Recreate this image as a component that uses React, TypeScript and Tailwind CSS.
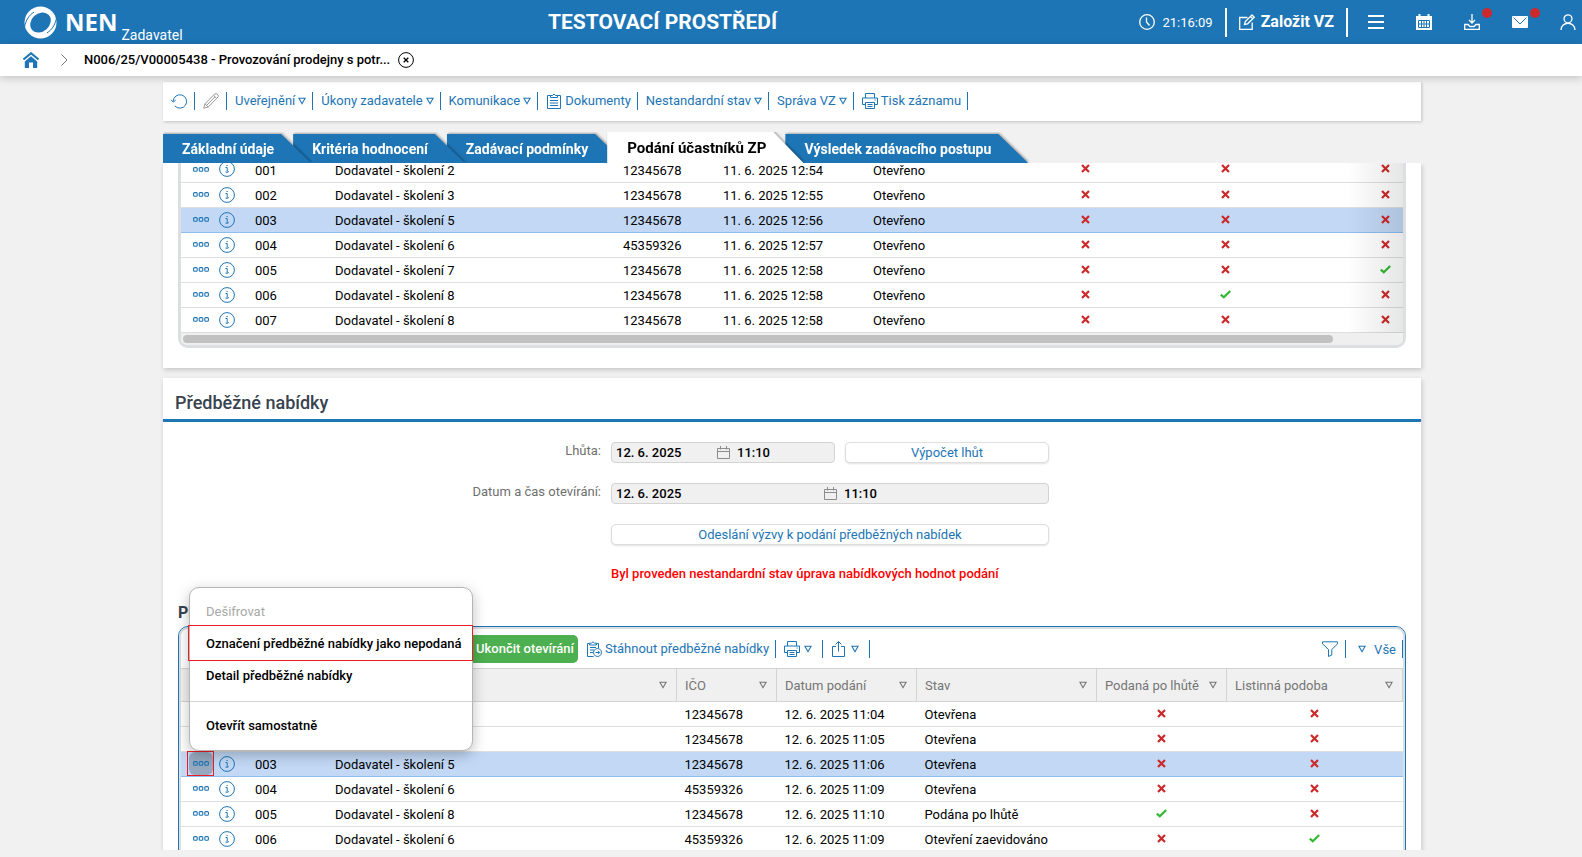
import { ReactNode, useState } from "react";

type Row = { no: string; name: string; ico: string; date: string; state: string; flags: boolean[] };

const BIDS: Row[] = [
  { no: "001", name: "Dodavatel - školení 2", ico: "12345678", date: "11. 6. 2025 12:54", state: "Otevřeno", flags: [false, false, false] },
  { no: "002", name: "Dodavatel - školení 3", ico: "12345678", date: "11. 6. 2025 12:55", state: "Otevřeno", flags: [false, false, false] },
  { no: "003", name: "Dodavatel - školení 5", ico: "12345678", date: "11. 6. 2025 12:56", state: "Otevřeno", flags: [false, false, false] },
  { no: "004", name: "Dodavatel - školení 6", ico: "45359326", date: "11. 6. 2025 12:57", state: "Otevřeno", flags: [false, false, false] },
  { no: "005", name: "Dodavatel - školení 7", ico: "12345678", date: "11. 6. 2025 12:58", state: "Otevřeno", flags: [false, false, true] },
  { no: "006", name: "Dodavatel - školení 8", ico: "12345678", date: "11. 6. 2025 12:58", state: "Otevřeno", flags: [false, true, false] },
  { no: "007", name: "Dodavatel - školení 8", ico: "12345678", date: "11. 6. 2025 12:58", state: "Otevřeno", flags: [false, false, false] },
];

const PRELIMINARY: Row[] = [
  { no: "001", name: "Dodavatel - školení 2", ico: "12345678", date: "12. 6. 2025 11:04", state: "Otevřena", flags: [false, false] },
  { no: "002", name: "Dodavatel - školení 3", ico: "12345678", date: "12. 6. 2025 11:05", state: "Otevřena", flags: [false, false] },
  { no: "003", name: "Dodavatel - školení 5", ico: "12345678", date: "12. 6. 2025 11:06", state: "Otevřena", flags: [false, false] },
  { no: "004", name: "Dodavatel - školení 6", ico: "45359326", date: "12. 6. 2025 11:09", state: "Otevřena", flags: [false, false] },
  { no: "005", name: "Dodavatel - školení 8", ico: "12345678", date: "12. 6. 2025 11:10", state: "Podána po lhůtě", flags: [true, false] },
  { no: "006", name: "Dodavatel - školení 6", ico: "45359326", date: "12. 6. 2025 11:09", state: "Otevření zaevidováno", flags: [false, true] },
];

const TABS = [
  { label: "Základní údaje", z: "z-[4]" },
  { label: "Kritéria hodnocení", z: "z-[3]" },
  { label: "Zadávací podmínky", z: "z-[2]" },
  { label: "Podání účastníků ZP", z: "z-[5]" },
  { label: "Výsledek zadávacího postupu", z: "z-[1]" },
];

/* ---------- icons ---------- */

function Icon({ size = 16, children, className = "" }: { size?: number; children: ReactNode; className?: string }) {
  return (
    <svg width={size} height={size} viewBox={`0 0 ${size} ${size}`} fill="none" stroke="currentColor"
      strokeWidth="1" aria-hidden="true" className={`shrink-0 ${className}`}>
      {children}
    </svg>
  );
}

const Caret = ({ className = "" }: { className?: string }) => (
  <svg width="8" height="8" viewBox="0 0 8 8" fill="none" stroke="currentColor" strokeWidth="1.1" aria-hidden="true"
    className={`shrink-0 ${className}`}>
    <path d="M0.9 1.2h6.2L4 6.7z" />
  </svg>
);

const Printer = () => (
  <Icon>
    <path d="M3.5 5V.5h9V5M3.5 11.5h-3v-6.500h15v6.500h-3M3.500 9.500h9v6h-9zM5.500 11.500h5M5.500 13.500h5M12.500 7h1.200" />
  </Icon>
);

const Clipboard = ({ arrow = false }: { arrow?: boolean }) => (
  <Icon>
    <path d={arrow ? "M3.500 2.500h-2v13h6M10.500 2.500h2v4.500" : "M4.500 2.500h-3v13h13v-13h-3"} />
    <path d={arrow ? "M3.500 4V2.200h2Q7 -.8 8.500 2.200h2V4zM4 6.500h6M4 9h4M4 11.500h3" : "M4.500 4.500v-2h2q1.500-3 3 0h2v2zM4 7.500h8M4 10h8M4 12.500h8"} />
    {arrow && <path d="M11.500 7.500a4 4 0 1 0 .01 0zM9.500 11.500h4M12 9.800l1.700 1.700-1.700 1.700" />}
  </Icon>
);

const SmallCalendar = () => (
  <svg width="13" height="13" viewBox="0 0 13 13" fill="none" stroke="#8c8c8c" aria-hidden="true" className="shrink-0">
    <path d="M.5 2.500h12v10H.5zM.5 5.500h12M3.500 0v3.500M9.500 0v3.500" />
  </svg>
);

const Flag = ({ on }: { on: boolean }) =>
  on ? (
    <svg width="11" height="9" viewBox="0 0 11 9" fill="none" stroke="#33b833" strokeWidth="2.2" role="img" aria-label="Ano" className="mx-auto block mb-px">
      <path d="M.8 4.600l3 2.700L10.200 1" />
    </svg>
  ) : (
    <svg width="9" height="9" viewBox="0 0 9 9" fill="none" stroke="#cc2a2a" strokeWidth="2.2" role="img" aria-label="Ne" className="mx-auto block mb-px">
      <path d="M1 1l7 7M8 1L1 8" />
    </svg>
  );

function Logo() {
  return (
    <svg width="33" height="33" viewBox="0 0 33 33" aria-hidden="true" className="shrink-0">
      <circle cx="16.500" cy="16.500" r="16" fill="#fff" />
      <ellipse cx="16.500" cy="16.500" rx="11.200" ry="9" transform="rotate(-42 16.500 16.500)" fill="#1d75b5" />
      <path d="M.5 21C2 14 5 9 10 6.200" fill="none" stroke="#1d75b5" strokeWidth="1" />
      <path d="M32.500 12C31 19 28 24 23 26.800" fill="none" stroke="#1d75b5" strokeWidth="1" />
    </svg>
  );
}

/* ---------- page chrome ---------- */

function TopBar() {
  return (
    <header className="h-11 shrink-0 bg-[#1d75b5] text-white flex items-center pl-6 pr-1.5">
      <a href="#" className="flex items-center h-full">
        <Logo />
        <span className="font-['Open_Sans',sans-serif] font-bold text-[24px] leading-none ml-2">NEN</span>
        <span className="text-sm leading-none self-end mb-[2px] ml-1">Zadavatel</span>
      </a>
      <p className="mx-auto pl-1 pt-0.5 text-[21px] font-bold">TESTOVACÍ PROSTŘEDÍ</p>
      <div className="flex items-center">
        <Icon className="mr-2"><circle cx="8" cy="8" r="7.300" strokeWidth="1.300" /><path d="M7.500 3.500V8l3 3.500" strokeWidth="1.300" /></Icon>
        <span className="text-[13px] pt-px">21:16:09</span>
        <span className="w-0.5 h-[29px] bg-white mx-3" />
        <button className="flex items-center gap-1.5 font-bold text-[16px]">
          <Icon>
            <path d="M8.500 3.500H.7v12h12.500V8.500M5.500 10.500l.8-3L13 1l2.300 2.200-6.700 6.600zM11.500 2.500l2.300 2.200" strokeWidth="1.300" />
          </Icon>
          Založit VZ
        </button>
        <span className="w-0.5 h-[29px] bg-white ml-3 mr-5" />
        <nav className="flex items-center gap-8">
          <button aria-label="Menu"><Icon><path d="M0 2h16M0 8h16M0 14h16" strokeWidth="2" /></Icon></button>
          <button aria-label="Kalendář">
            <Icon>
              <path d="M0 2h16v14H0z" fill="currentColor" stroke="none" />
              <path d="M3.500 0v4M12.500 0v4" strokeWidth="2" />
              <path d="M2.500 6.500h11v7h-11zM2.500 10h11M5.500 6.500v7M8 6.500v7M10.500 6.500v7" stroke="#1d75b5" />
            </Icon>
          </button>
          <button aria-label="Stažené soubory" className="relative">
            <Icon><path d="M8 0v9M5 6l3 3 3-3M4 10.500H.7v5h14.600v-5H12l-2 2H6z" strokeWidth="1.300" /></Icon>
            <span className="absolute -top-1.5 left-[18px] size-2.5 rounded-full bg-[#cc2a2a]" />
          </button>
          <button aria-label="Zprávy" className="relative">
            <Icon>
              <rect y="2" width="16" height="12" rx="1" fill="currentColor" stroke="none" />
              <path d="M1.500 3.500L8 10l6.500-6.500" stroke="#1d75b5" />
            </Icon>
            <span className="absolute -top-1.5 left-[18px] size-2.5 rounded-full bg-[#cc2a2a]" />
          </button>
          <button aria-label="Uživatel">
            <Icon><circle cx="8" cy="4.800" r="4" strokeWidth="1.300" /><path d="M1 16c0-9 14-9 14 0" strokeWidth="1.300" /></Icon>
          </button>
        </nav>
      </div>
    </header>
  );
}

function Breadcrumb() {
  return (
    <div className="h-8 shrink-0 bg-white flex items-center pl-[23px] shadow-[0_2px_8px_rgba(0,0,0,0.2)] relative z-10">
      <a href="#" aria-label="Domů" className="text-[#1d75b5]">
        <Icon>
          <path d="M8 4.200L1.800 9.500V16H6v-5.500h4V16h4.200V9.500z" fill="currentColor" stroke="none" />
          <path d="M.5 7.500L8 1.200l7.500 6.300" strokeWidth="2" />
        </Icon>
      </a>
      <svg width="7" height="12" viewBox="0 0 7 12" fill="none" stroke="#777" className="ml-[22px]" aria-hidden="true"><path d="M.5.5l5.500 5.500-5.500 5.500" /></svg>
      <span className="ml-4 text-[13px] font-medium">N006/25/V00005438 - Provozování prodejny s potr...</span>
      <button aria-label="Zavřít" className="ml-2">
        <Icon><circle cx="8" cy="8" r="7.400" /><path d="M5.700 5.700l4.600 4.600M10.300 5.700l-4.600 4.600" strokeWidth="1.300" /></Icon>
      </button>
    </div>
  );
}

function ToolItem({ label, icon, caret }: { label?: string; icon?: ReactNode; caret?: boolean }) {
  const spacing = label ? "gap-[3px] pr-1.5" : caret ? "gap-1 pr-[10px]" : "pr-[7px]";
  return (
    <button className={`h-[18px] pl-2 border-r border-[#1d75b5] flex items-center text-[13px] ${spacing}`} aria-label={label ? undefined : "Akce"}>
      {icon}
      {label}
      {caret && <Caret />}
    </button>
  );
}

function RecordToolbar() {
  return (
    <div className="h-[39px] pb-0.5 bg-white text-[#1d75b5] flex items-center shadow-[1px_1px_3px_rgba(0,0,0,0.2)]">
      <ToolItem icon={<Icon><path d="M2.200 8.500a6.700 6.700 0 1 1 1.600 4.300M0 6.800l2.300 2.300L4.700 7" /></Icon>} />
      <ToolItem icon={<Icon className="text-[#999]"><path d="M.7 15.300l1.200-4.500L12 .8q2-.8 3.200 1.200.3 1.200 0 1.800L5.300 14zM10.500 2.300l3.200 3.200M2 10.800l3.200 3.200M3.500 12.500l8.500-8.600" /></Icon>} />
      <ToolItem label="Uveřejnění" caret />
      <ToolItem label="Úkony zadavatele" caret />
      <ToolItem label="Komunikace" caret />
      <ToolItem label="Dokumenty" icon={<Clipboard />} />
      <ToolItem label="Nestandardní stav" caret />
      <ToolItem label="Správa VZ" caret />
      <ToolItem label="Tisk záznamu" icon={<Printer />} />
    </div>
  );
}

function Tabs({ active, onSelect }: { active: number; onSelect: (i: number) => void }) {
  return (
    <div role="tablist" className="mt-[11px] h-[31px] flex items-end overflow-hidden">
      {TABS.map((t, i) => {
        const on = i === active;
        return (
          <div key={t.label} className={`relative -mr-[18px] drop-shadow-[1px_-1px_1px_rgba(0,0,0,0.3)] ${t.z}`}>
            <button role="tab" aria-selected={on} onClick={() => onSelect(i)}
              className={`block pr-[37px] font-bold whitespace-nowrap [clip-path:polygon(0_0,calc(100%-30px)_0,100%_100%,0_100%)] ${
                on ? "h-[31px] pl-5 pt-px bg-white text-black text-[15px]" : "h-[29px] pl-[19px] pt-px bg-[#1d75b5] text-white text-sm"
              }`}>
              {t.label}
            </button>
          </div>
        );
      })}
    </div>
  );
}

/* ---------- tables ---------- */

function RowActions({ open, onToggle }: { open?: boolean; onToggle?: () => void }) {
  return (
    <div className="flex items-center pl-2 gap-1.5 text-[#1d75b5]">
      <button aria-label="Možnosti řádku" onClick={onToggle}
        className={`relative w-6 h-[23px] rounded-md grid place-items-center ${open ? "bg-[#97a9bf]" : ""}`}>
        <svg width="16" height="5" viewBox="0 0 16 5" fill="none" stroke="currentColor" strokeWidth="1.100" aria-hidden="true">
          <rect x=".6" y=".6" width="3.600" height="3.600" rx="1" />
          <rect x="6.200" y=".6" width="3.600" height="3.600" rx="1" />
          <rect x="11.800" y=".6" width="3.600" height="3.600" rx="1" />
        </svg>
        {open && <span className="absolute -left-0.5 -right-px -inset-y-px border border-[#ee1c25]" />}
      </button>
      <button aria-label="Informace">
        <Icon><circle cx="8" cy="8" r="7.400" /><path d="M6.500 6.500h1.700v4.200M6.500 11q1.700 1 3.300-.5M7.500 4.500h1.200" /></Icon>
      </button>
    </div>
  );
}

function TableRow({ row, selected, open, onToggle }: { row: Row; selected: boolean; open?: boolean; onToggle?: () => void }) {
  return (
    <tr className={`h-[25px] border-b ${selected ? "bg-[#c2d8f5] border-[#8fbdf0]" : "border-[#dedfe1]"}`}>
      <td><RowActions open={open} onToggle={onToggle} /></td>
      <td className="pl-2 pt-0.5">{row.no}</td>
      <td className="pl-2 pt-0.5">{row.name}</td>
      <td className="pl-2 pt-0.5">{row.ico}</td>
      <td className="pl-2 pt-0.5">{row.date}</td>
      <td className="pl-2 pt-0.5">{row.state}</td>
      {row.flags.map((f, i) => <td key={i}><Flag on={f} /></td>)}
    </tr>
  );
}

function BidsPanel() {
  return (
    <section className="bg-white px-[15px] pb-5 shadow-[1px_2px_5px_rgba(0,0,0,0.18)]">
      <div className="relative border-[3px] border-t-0 border-[#dcdee1] rounded-b-[10px] overflow-hidden">
        <table className="-mt-1.5 w-[1294px] table-fixed border-collapse text-[13px] leading-none">
          <colgroup>
            <col className="w-[66px]" /><col className="w-20" /><col className="w-72" /><col className="w-[100px]" />
            <col className="w-[150px]" /><col className="w-[150px]" /><col className="w-[140px]" /><col className="w-[140px]" /><col />
          </colgroup>
          <tbody>
            {BIDS.map(r => <TableRow key={r.no} row={r} selected={r.no === "003"} />)}
          </tbody>
        </table>
        <div className="absolute right-0 top-0 bottom-3 w-14 bg-linear-to-r from-transparent to-black/10" />
        <div className="h-3 bg-[#efefef] p-0.5">
          <div className="h-2 mr-[68px] rounded-full bg-[#c1c1c1]" />
        </div>
      </div>
    </section>
  );
}

function DateTimeField({ id, gap }: { id: string; gap: string }) {
  return (
    <div className="h-[21px] flex-1 flex items-center rounded-[4px] border border-[#d3d3d3] bg-[#f0f0f0] pl-1 text-[13px] font-medium">
      <input id={id} defaultValue="12. 6. 2025" className={`outline-none pt-px ${gap}`} />
      <SmallCalendar />
      <input aria-label="Čas" defaultValue="11:10" className="w-12 ml-[7px] pt-px outline-none" />
    </div>
  );
}

const OUTLINE_BTN = "rounded-[5px] border border-[#dedede] bg-white text-[#1d75b5] text-[13px] leading-none shadow-[0_1px_2px_rgba(0,0,0,0.12)]";

function BidForm() {
  return (
    <div className="pt-5 grid grid-cols-[438px_438px] gap-x-[10px] gap-y-5 text-[13px]">
      <label htmlFor="deadline" className="text-right text-[#6f6f6f] leading-[18px]">Lhůta:</label>
      <div className="flex gap-[10px]">
        <DateTimeField id="deadline" gap="w-[101px]" />
        <button className={`w-[204px] h-[21px] ${OUTLINE_BTN}`}>Výpočet lhůt</button>
      </div>
      <label htmlFor="opening" className="text-right text-[#6f6f6f] leading-[18px]">Datum a čas otevírání:</label>
      <div className="flex"><DateTimeField id="opening" gap="w-52" /></div>
      <button className={`col-start-2 h-[21px] ${OUTLINE_BTN}`}>Odeslání výzvy k podání předběžných nabídek</button>
      <p className="col-start-2 leading-[18px] font-medium text-[#f00]">Byl proveden nestandardní stav úprava nabídkových hodnot podání</p>
    </div>
  );
}

function ContextMenu() {
  return (
    <div role="menu" className="absolute left-[26px] top-[209px] z-20 w-[284px] bg-white rounded-[10px] border border-[#b5b5b5] py-2 text-[13px] font-medium whitespace-nowrap shadow-[0_4px_14px_rgba(0,0,0,0.25)]">
      <button role="menuitem" disabled className="block h-8 px-4 font-normal text-[#a8a8a8]">Dešifrovat</button>
      <button role="menuitem" className="relative block h-8 w-full px-4 text-left">
        Označení předběžné nabídky jako nepodaná
        <span className="absolute -left-0.5 -right-px -top-[3px] -bottom-px border border-[#ee1c25]" />
      </button>
      <button role="menuitem" className="block h-8 px-4">Detail předběžné nabídky</button>
      <div className="mt-[9px] mb-2 h-px bg-[#d3d3d3]" />
      <button role="menuitem" className="block h-8 px-4">Otevřít samostatně</button>
    </div>
  );
}

function HeaderCell({ label, children }: { label?: string; children?: ReactNode }) {
  return (
    <th aria-label={label} className="border-r border-[#d3d3d3] font-normal text-left pl-2 pr-[9px] pt-px">
      <div className="flex items-center justify-between">
        <span className="whitespace-nowrap">{children}</span>
        <Caret />
      </div>
    </th>
  );
}

function PreliminaryPanel() {
  const [menuOpen, setMenuOpen] = useState(true);

  return (
    <section className="relative mt-2.5 bg-white shadow-[1px_2px_5px_rgba(0,0,0,0.18)]">
      <h2 className="h-11 pl-3 pt-2 flex items-center border-b-[3px] border-[#1d75b5] text-[18px] font-medium text-[#37434f]">Předběžné nabídky</h2>
      <BidForm />
      <div className="px-[15px]">
        <h3 className="mt-[18px] h-6 leading-6 text-base font-bold text-[#37434f]">Předběžné nabídky</h3>
        <div className="mt-px rounded-t-[10px] border border-[#1d75b5] overflow-hidden">
          <div className="rounded-t-[9px] border-2 border-[#dcdee1] overflow-hidden">
            <div className="h-[39px] pt-px flex items-center pl-[287px] text-[#1d75b5]">
              <button className="h-7 pl-2 pr-1 rounded-[5px] bg-[#4caf50] text-white text-[13px] font-medium">Ukončit otevírání</button>
              <ToolItem label="Stáhnout předběžné nabídky" icon={<Clipboard arrow />} />
              <ToolItem icon={<Printer />} caret />
              <ToolItem icon={<Icon><path d="M5 5.500H1.500v10h12v-10H10M7.500 10.500v-10M4.500 3.500l3-3 3 3" /></Icon>} caret />
              <div className="ml-auto flex items-center">
                <button aria-label="Filtr" className="h-[18px] pr-[7px] border-r border-[#1d75b5]">
                  <Icon><path d="M.5.8h15v2L9.800 8.500v5.500l-3.300 1.500v-7L.5 2.800z" /></Icon>
                </button>
                <button className="h-[18px] flex items-center gap-2 pl-3 pr-1.5 border-r border-[#1d75b5] text-[13px]">
                  <Caret />
                  <span className="pt-0.5">Vše</span>
                </button>
              </div>
            </div>
            <table className="w-full table-fixed border-collapse text-[13px] leading-none">
              <colgroup>
                <col className="w-[66px]" /><col className="w-20" /><col /><col className="w-[100px]" />
                <col className="w-[140px]" /><col className="w-[180px]" /><col className="w-[130px]" /><col className="w-44" />
              </colgroup>
              <thead>
                <tr className="h-[33px] bg-[#f0f0f0] border-y border-[#d3d3d3] text-[#757575]">
                  <th aria-label="Akce" className="border-r border-[#d3d3d3]" />
                  <HeaderCell label="Číslo" />
                  <HeaderCell label="Dodavatel" />
                  <HeaderCell>IČO</HeaderCell>
                  <HeaderCell>Datum podání</HeaderCell>
                  <HeaderCell>Stav</HeaderCell>
                  <HeaderCell>Podaná po lhůtě</HeaderCell>
                  <HeaderCell>Listinná podoba</HeaderCell>
                </tr>
              </thead>
              <tbody>
                {PRELIMINARY.map(r => (
                  <TableRow key={r.no} row={r} selected={r.no === "003"}
                    open={r.no === "003" && menuOpen}
                    onToggle={r.no === "003" ? () => setMenuOpen(o => !o) : undefined} />
                ))}
              </tbody>
            </table>
          </div>
        </div>
      </div>
      {menuOpen && <ContextMenu />}
    </section>
  );
}

export default function App() {
  const [tab, setTab] = useState(3);

  return (
    <div className="h-screen flex flex-col overflow-hidden bg-[#f1f1f1] text-black font-[Roboto,'Liberation_Sans',sans-serif]">
      <TopBar />
      <Breadcrumb />
      <main className="flex-1 min-h-0 flex flex-col pt-1.5 pb-[7px]">
        <div className="w-full pl-0.5">
          <div className="mx-auto max-w-[1258px]">
            <RecordToolbar />
            <Tabs active={tab} onSelect={setTab} />
          </div>
        </div>
        <div className="flex-1 min-h-0 overflow-hidden pl-0.5">
          <div className="mx-auto max-w-[1258px]">
            <BidsPanel />
            <PreliminaryPanel />
          </div>
        </div>
      </main>
    </div>
  );
}
